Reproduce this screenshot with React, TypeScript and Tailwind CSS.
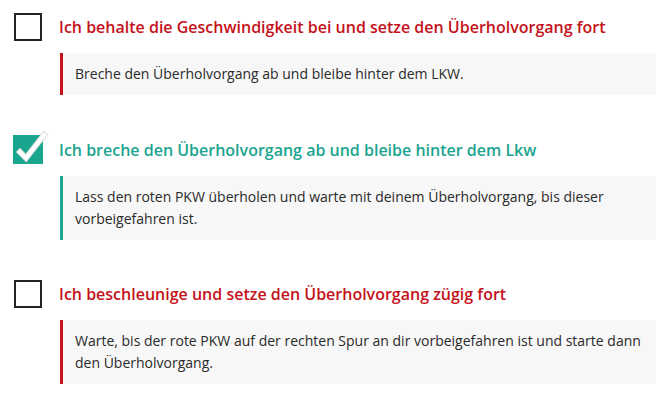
import React from 'react'

const answers = [
    {
        title: 'Ich behalte die Geschwindigkeit bei und setze den Überholvorgang fort',
        text: 'Breche den Überholvorgang ab und bleibe hinter dem LKW.',
        correct: false,
    },
    {
        title: 'Ich breche den Überholvorgang ab und bleibe hinter dem Lkw',
        text: 'Lass den roten PKW überholen und warte mit deinem Überholvorgang, bis dieser vorbeigefahren ist.',
        correct: true,
    },
    {
        title: 'Ich beschleunige und setze den Überholvorgang zügig fort',
        text: 'Warte, bis der rote PKW auf der rechten Spur an dir vorbeigefahren ist und starte dann den Überholvorgang.',
        correct: false,
    },
]

function Checkbox({ checked }: { checked: boolean }) {
    if (!checked) {
        return <div className="w-[28px] h-[28px] shrink-0 border-2 border-[#222] bg-white" />
    }
    // teal box is a touch bigger than the empty one, so pull it in to keep the title aligned
    return (
        <div className="relative w-[30px] h-[29px] shrink-0 -mx-[1px] bg-[#1aa58f]">
            <svg className="absolute -top-[2px] left-0 overflow-visible" width="36" height="32" viewBox="0 0 36 32">
                <polyline points="7,19 13,25 31,2" fill="none" stroke="#dcdcdc" strokeWidth="6" strokeLinecap="square" />
                <polyline points="7,19 13,25 31,2" fill="none" stroke="#fff" strokeWidth="4" strokeLinecap="square" />
            </svg>
        </div>
    )
}

export default function App() {
    return (
        <div className="w-[656px] min-h-[404px] bg-white pt-[13px] font-['Open_Sans',sans-serif]">
            {answers.map((item, index) => (
                <div key={index} className="mb-[40px]">
                    <div className="flex items-center gap-[17px] pl-[14px]">
                        <Checkbox checked={item.correct} />
                        <span className={`text-[16px] font-semibold ${item.correct ? 'text-[#1aa58f]' : 'text-[#c4121a]'}`}>
                            {item.title}
                        </span>
                    </div>
                    <div
                        className={`mt-[12px] ml-[60px] border-l-[3px] bg-[#f7f7f7] py-[10px] pl-[12px] pr-[10px] text-[14px] leading-[22px] text-[#2a2a2a] ${
                            item.correct ? 'border-[#1aa58f]' : 'border-[#c4121a]'
                        }`}
                    >
                        {item.text}
                    </div>
                </div>
            ))}
        </div>
    )
}
